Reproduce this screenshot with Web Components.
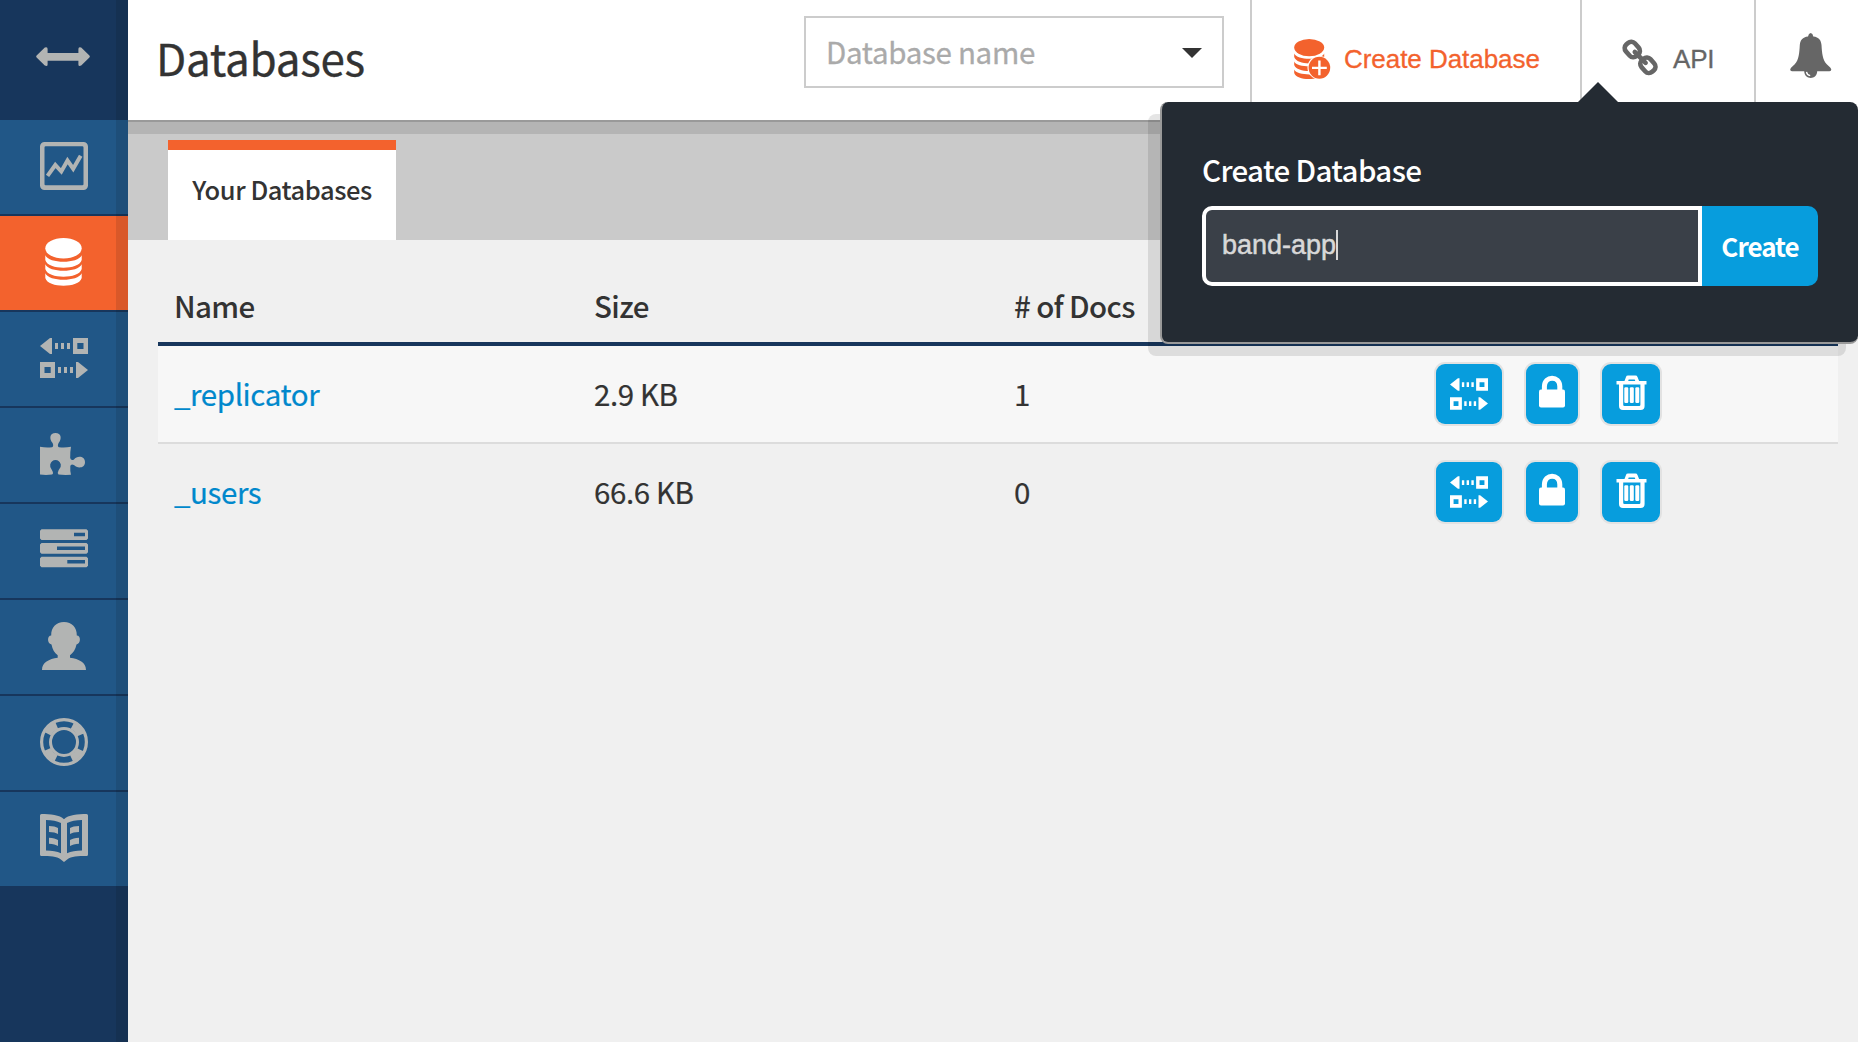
<!DOCTYPE html>
<html lang="en">
<head>
<meta charset="utf-8">
<title>Databases</title>
<style>
html,body{margin:0;height:100%;overflow:hidden}
body{font-family:"Noto Sans CJK SC","Liberation Sans",sans-serif;color:#333;background:#f0f0f0}
</style>
</head>
<body>
<app-shell></app-shell>
<script>
const define = (name, html, setup) => {
  const t = document.createElement('template');
  t.innerHTML = html;
  customElements.define(name, class extends HTMLElement {
    connectedCallback() {
      if (this.shadowRoot) return;
      this.attachShadow({ mode: 'open' }).append(t.content.cloneNode(true));
      if (setup) setup(this, this.shadowRoot);
    }
  });
};

const ICONS = {
  arrows: ['0 0 54 20', '<path d="M.6 8.6L8.8.6Q11.6-.6 11.6 2V6H42.4V2Q42.4-.6 45.2.6L53.4 8.6Q54.4 9.6 53.4 10.6L45.2 18.6Q42.4 19.8 42.4 17.4V13.8H11.6V17.4Q11.6 19.8 8.8 18.6L.6 10.6Q-.4 9.6 .6 8.6Z"/>'],
  chart: ['0 0 48 48', '<path fill-rule="evenodd" d="M4.5 0H43.5A4.5 4.5 0 0 1 48 4.500V43.500A4.500 4.500 0 0 1 43.500 48H4.500A4.500 4.500 0 0 1 0 43.500V4.500A4.500 4.500 0 0 1 4.500 0ZM5.700 4.300Q4.500 4.300 4.500 5.500V42.300Q4.500 43.300 5.700 43.300H42.300Q43.500 43.300 43.500 42.300V5.500Q43.500 4.300 42.300 4.300Z"/><path d="M7.500 33.800L15.300 23L21.300 29.500L27.500 18.500L33.200 26.700L40.700 13.800" fill="none" stroke="currentColor" stroke-width="4"/>'],
  db: ['0 0 48 48', '<ellipse cx="23.500" cy="10.300" rx="18.200" ry="10.300"/><path d="M5.300 17.300C9 26 38 26 41.700 17.300V22C39 32.300 8 32.300 5.300 22Z"/><path d="M5.300 26.300C9 35 38 35 41.700 26.300V31C39 41.300 8 41.300 5.300 31Z"/><path d="M5.300 35.300C9 44 38 44 41.700 35.300V40C39 50.300 8 50.300 5.300 40Z"/>'],
  replicate: ['0 0 48 48', '<path d="M0 12L10 4H12V20H10ZM15 9h3v6h-3zM21 9h3v6h-3zM27 9h3v6h-3zM48 36L38 28H36V44H38ZM18 33h3v6h-3zM24 33h3v6h-3zM30 33h3v6h-3z"/><path fill-rule="evenodd" d="M33 4H48V20H33ZM37.300 9V15H43.500V9ZM0 28H15V44H0ZM4.500 33V39H10.700V33Z"/>'],
  puzzle: ['0 0 48 48', '<path d="M0 16.700Q6 18 12 17.200Q14 16.500 12.600 13C9 9 9.500 3 15.500 3S22 9 18.600 13Q17 16.500 19 17.200Q25 18 31 16.700Q30 22 30.200 28Q31 31 34 29.500C37 25.500 45 25.800 45 32.200S37 38.500 34 35Q31 33.500 30.300 36Q30 41 31 44.800Q24 45.200 18.500 44.600Q17 43 18.600 40.200Q21.500 37.500 20.800 34.500Q19.500 30 15.500 30T10.200 34.500Q9.500 37.500 12 40.200Q14 43.500 12 44.600Q6 45.400 0 44.600Z"/>'],
  servers: ['0 0 48 48', '<path fill-rule="evenodd" d="M1.500 3.300H46.500L48 4.800V12.500L46.500 14H1.500L0 12.500V4.800ZM34 6.800V10.300H45V6.800ZM1.500 17H46.500L48 18.500V26.200L46.500 27.700H1.500L0 26.200V18.500ZM17 20.500V24H45V20.500ZM1.500 30.800H46.500L48 32.300V39.800L46.500 41.200H1.500L0 39.800V32.300ZM27.300 34V37.500H45V34Z"/>'],
  user: ['0 0 48 48', '<path d="M24 0C32 0 37 5.500 36.800 13.500C41 13.500 41 21.500 36.500 22.500C35.500 27.500 33 31 30 33.200V35.800C39 37 46 40.500 46 48H2C2 40.500 9 37 17.700 35.800V33.200C14.500 31 12.500 27.500 11.500 22.500C7 21.500 7 13.500 11.200 13.500C11 5.500 16 0 24 0Z"/>'],
  ring: ['0 0 48 48', '<g fill="none" stroke="currentColor"><circle cx="24" cy="24" r="22.400" stroke-width="3.200"/><circle cx="24" cy="24" r="13.500" stroke-width="3"/><circle cx="24" cy="24" r="18" stroke-width="7" stroke-dasharray="12.300 15.974" stroke-dashoffset="-7.990"/></g>'],
  book: ['0 0 48 48', '<path fill-rule="evenodd" d="M1.500 0C10 0 20 1 24 5.200C28 1 38 0 46.500 0Q48 0 48 1.500V40.500Q48 42 46.500 42C38 42 31 42.500 27.500 45.200L24 48L20.500 45.200C17 42.500 10 42 1.500 42Q0 42 0 40.500V1.500Q0 0 1.500 0ZM6 6V36.500C12 36.700 17 37.300 21 39.300V9C17 7 12 6.200 6 6ZM42 6C36 6.200 31 7 27 9V39.300C31 37.300 36 36.700 42 36.500Z"/><path d="M9 12Q15 12.200 18 14V20Q15 18.200 9 18ZM9 23.700Q15 24 18 26V32Q15 30 9 29.700ZM39 12Q33 12.200 30 14V20Q33 18.200 39 18ZM39 23.700Q33 24 30 26V32Q33 30 39 29.700Z"/>'],
  dbadd: ['0 0 37 41', '<ellipse cx="15.200" cy="8.600" rx="15" ry="8.600"/><path d="M.2 14.500C3 21.600 27.400 21.600 30.200 14.500V18C27 26.500 3 26.500 .2 18ZM.2 22.500C3 29 27.400 29 30.200 22.500V26C27 34 3 34 .2 26ZM.2 30.500C3 37 27.400 37 30.200 30.500V33C27 42.300 3 42.300 .2 34Z"/><circle cx="25.300" cy="28.700" r="11.800" fill="#fff"/><ellipse cx="25.400" cy="28.700" rx="10.800" ry="11"/><path d="M25.400 21.500V36.200M18 28.900H32.800" fill="none" stroke="#fff" stroke-width="2.400"/>'],
  link: ['0 0 37 38', '<g fill="none" stroke="currentColor" stroke-width="4.600"><rect x="-7.700" y="-6" width="15.400" height="12" rx="4.800" transform="translate(10.300 10.500) rotate(48)"/><rect x="-7.700" y="-6" width="15.400" height="12" rx="4.800" transform="translate(25.900 26.300) rotate(48)"/><path d="M12.800 13L23.600 23.800" stroke-linecap="round"/></g>'],
  bell: ['0 0 42 46', '<path d="M20.700 0Q22.800 .3 23.300 3.500C29 4.200 31 7 31.500 12C32 20 32.500 27 37 31.500Q41.300 35 41.300 36.500Q41.300 38.200 39.500 38.200H2Q.2 38.200 .2 36.500Q.2 35 4.500 31.500C9 27 9.300 20 9.800 12C10.300 7 12.500 4.200 18 3.500Q18.600 .3 20.700 0Z"/><path d="M14.200 38H27.200C27.200 47.200 14.200 47.200 14.200 38Z"/><path d="M16.500 38.800Q17 42 20.200 42.600" fill="none" stroke="#fff" stroke-width="1.300"/>'],
  lock: ['0 0 26 32', '<path d="M2 13.500H24Q26 13.500 26 15.500V29.500Q26 31.500 24 31.500H2Q0 31.500 0 29.500V15.500Q0 13.500 2 13.500Z"/><path d="M5.400 15V10.600C5.400-.6 20.800-.6 20.800 10.600V15" fill="none" stroke="currentColor" stroke-width="5"/>'],
  trash: ['0 0 32 36', '<path d="M1 6H30.500V9.500H28.600V31Q28.600 35 24.600 35H7Q3 35 3 31V9.500H.5V6ZM7.200 9.500V29.800Q7.200 31 8.400 31H23.200Q24.400 31 24.400 29.800V9.500Z" fill-rule="evenodd"/><path d="M8.300 6.500L10 2Q10.400 .6 12 .6H19.500Q21 .6 21.500 2L23.300 6.500H19.500L18.700 4.400H12.700L12 6.500Z"/><rect x="8.300" y="12.300" width="4" height="15.600" rx="1.200"/><rect x="13.800" y="12.300" width="4" height="15.600" rx="1.200"/><rect x="19.300" y="12.300" width="4" height="15.600" rx="1.200"/>']
};

define('ui-icon', `<style>:host{display:block;flex:none}svg{display:block;width:100%;height:100%;fill:currentColor;overflow:visible}</style><svg></svg>`,
  (el, root) => {
    const [box, body] = ICONS[el.getAttribute('name')];
    const svg = root.querySelector('svg');
    svg.setAttribute('viewBox', box);
    svg.innerHTML = body;
  });

define('nav-item', `<style>
:host{display:flex;justify-content:center;box-sizing:border-box;height:96px;padding-top:22px;background:#215787;border-bottom:2px solid #17365c;color:#b2b4b3}
:host([active]){background:#f3622d;color:#fff}
ui-icon{width:48px;height:48px}
</style>`,
  (el, root) => {
    const i = document.createElement('ui-icon');
    i.setAttribute('name', el.getAttribute('icon'));
    root.append(i);
  });

define('side-nav', `<style>
:host{display:flex;flex-direction:column;position:relative;width:128px;flex:none;background:#17365c}
:host::after{content:"";position:absolute;inset:0 0 0 auto;width:12px;background:rgba(12,12,12,.11)}
.toggle{box-sizing:border-box;height:120px;padding:47px 0 0 36px;color:#b2b4b3}
.toggle ui-icon{width:54px;height:20px}
</style>
<div class="toggle"><ui-icon name="arrows"></ui-icon></div>
<nav-item icon="chart"></nav-item><nav-item icon="db" active></nav-item><nav-item icon="replicate"></nav-item><nav-item icon="puzzle"></nav-item><nav-item icon="servers"></nav-item><nav-item icon="user"></nav-item><nav-item icon="ring"></nav-item><nav-item icon="book"></nav-item>`);

define('db-select', `<style>
:host{display:flex;align-items:center;justify-content:space-between;box-sizing:border-box;width:420px;height:72px;border:2px solid #ccc;padding:0 20px 2px;color:#aaa;font-size:29.5px;letter-spacing:-.3px;line-height:40px}
span{-webkit-text-stroke:.3px #aaa}
i{border:10px solid transparent;border-top-color:#333;border-bottom:0;margin-top:4px}
</style><span><slot></slot></span><i></i>`);

define('head-button', `<style>
:host{display:flex;align-items:center;box-sizing:border-box;height:120px;border-left:2px solid #ccc;padding-bottom:2px;font:26px/30px "Liberation Sans",Arial,sans-serif;color:#666}
</style><slot></slot>`);

define('page-header', `<style>
:host{display:flex;box-sizing:border-box;height:122px;background:#fff;border-bottom:2px solid #999}
h1{flex:1;margin:0;padding-left:28px;font-size:44px;font-weight:400;line-height:114px;letter-spacing:-.3px;-webkit-text-stroke:.3px #333}
db-select{margin:16px 26px 0 0}
head-button{flex:none}
.create{width:330px;color:#f3622d;padding-left:42px;gap:13px}
.create ui-icon{width:37px;height:41px}
.create span{letter-spacing:-.05px;-webkit-text-stroke:.3px #f3622d}
.api{width:174px;padding-left:40px;gap:14px}
.api ui-icon{width:37px;height:38px;margin-top:-2px}
.api span{letter-spacing:-.2px;-webkit-text-stroke:.3px #666}
.bell{width:104px;padding-left:34px}
.bell ui-icon{width:42px;height:46px;margin-top:-7px}
</style>
<h1>Databases</h1>
<db-select>Database name</db-select>
<head-button class="create"><ui-icon name="dbadd"></ui-icon><span>Create Database</span></head-button>
<head-button class="api"><ui-icon name="link"></ui-icon><span>API</span></head-button>
<head-button class="bell"><ui-icon name="bell"></ui-icon></head-button>`);

define('tab-bar', `<style>
:host{display:flex;align-items:flex-end;box-sizing:border-box;height:118px;padding-left:40px;background:linear-gradient(#b4b4b4 12px,#cacaca 12px)}
.tab{box-sizing:border-box;width:228px;height:100px;border-top:10px solid #f3622d;background:#fff;text-align:center;font-size:25.5px;font-weight:500;letter-spacing:-.45px;line-height:77px;white-space:nowrap}
</style><div class="tab"><slot></slot></div>`);

define('action-button', `<style>
:host{display:flex;justify-content:center;align-items:center;box-sizing:border-box;width:var(--w);height:60px;border-radius:9px;background:#079ddd;color:#fff;box-shadow:0 0 0 2px #e2e2e2}
</style><slot></slot>`);

define('db-row', `<style>
:host{display:flex;align-items:center;box-sizing:border-box;height:98px;border-bottom:2px solid #f0f0f0;font-size:29.5px;line-height:44px;letter-spacing:-.4px}
:host([striped]){background:#f7f7f7;border-color:#dcdcdc}
.c{box-sizing:border-box;width:420px;padding:0 0 2px 16px;-webkit-text-stroke:.2px}
.name{color:#08c}
.actions{display:flex;gap:24px;padding-left:18px}
.r ui-icon{width:38px;height:38px}
.l ui-icon{width:26px;height:32px;margin-bottom:5px}
.t ui-icon{width:32px;height:36px;margin:0 0 3px 1px}
</style>
<div class="c name"><slot name="name"></slot></div><div class="c"><slot name="size"></slot></div><div class="c"><slot name="docs"></slot></div>
<div class="actions">
<action-button class="r" style="--w:66px"><ui-icon name="replicate"></ui-icon></action-button>
<action-button class="l" style="--w:52px"><ui-icon name="lock"></ui-icon></action-button>
<action-button class="t" style="--w:58px"><ui-icon name="trash"></ui-icon></action-button>
</div>`);

define('db-table', `<style>
:host{display:block;padding:40px 20px 0 30px}
.head{display:flex;box-sizing:border-box;height:66px;border-bottom:4px solid #17365c;font-size:29.5px;font-weight:500;line-height:50px;letter-spacing:-.65px}
.head div{box-sizing:border-box;width:420px;padding-left:16px}
</style>
<div class="head"><div>Name</div><div>Size</div><div># of Docs</div></div>
<slot></slot>`);

define('create-tray', `<style>
:host{display:block;position:absolute;right:0;top:102px;box-sizing:border-box;width:698px;height:242px;padding:47px 40px 0 40px;background:#242b33;border-left:2px solid #999;border-bottom:2px solid #999;border-radius:8px;box-shadow:-12px 12px 0 rgba(0,0,0,.1)}
:host::before{content:"";position:absolute;left:416px;top:-20px;border:20px solid transparent;border-top:0;border-bottom-color:#242b33}
.label{color:#fff;font-size:29.5px;font-weight:500;letter-spacing:-.65px;line-height:40px;height:57px}
.row{display:flex;height:80px}
.field{display:flex;align-items:center;box-sizing:border-box;width:500px;border:4px solid #fff;border-radius:10px 0 0 10px;background:#3a4048;padding:0 0 2px 16px;color:#d8d8d8;font:27px/30px "Liberation Sans",Arial,sans-serif}
.field span{-webkit-text-stroke:.5px #d8d8d8}
.field i{width:2px;height:30px;background:#d8d8d8}
.go{width:116px;border-radius:0 10px 10px 0;background:#079ddd;color:#fff;text-align:center;font-size:26px;font-weight:600;line-height:79px;letter-spacing:-1px}
</style>
<div class="label">Create Database</div>
<div class="row"><div class="field"><span>band-app</span><i></i></div><div class="go">Create</div></div>`);

define('app-shell', `<style>
:host{display:flex;position:relative;width:1858px;height:1042px;overflow:hidden}
main{flex:1;min-width:0;background:#f0f0f0}
</style>
<side-nav></side-nav>
<main>
<page-header></page-header>
<tab-bar>Your Databases</tab-bar>
<db-table>
<db-row striped><span slot="name">_replicator</span><span slot="size">2.9 KB</span><span slot="docs">1</span></db-row>
<db-row><span slot="name">_users</span><span slot="size">66.6 KB</span><span slot="docs">0</span></db-row>
</db-table>
</main>
<create-tray></create-tray>`);
</script>
</body>
</html>
